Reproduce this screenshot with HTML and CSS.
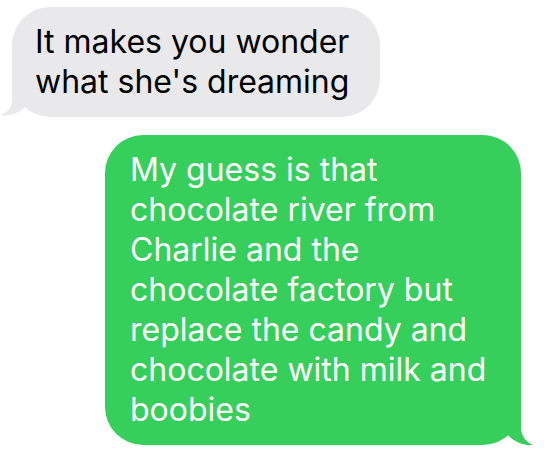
FILE: index.html
```html
<!DOCTYPE html>
<html>
<head>
<meta charset="utf-8">
<link rel="stylesheet" href="styles.css">
</head>
<body>
<div class="thread">
  <div class="bubble received">
    <svg class="tail tail-left" width="40" height="40" viewBox="0 0 40 40"><path d="M12 0 L12 22 C12 31 7 36 0 38 C7 40 18 37 25 30 L25 0 Z" fill="#e9e9eb"/></svg>
    <span class="text">It makes you wonder<br>what she's dreaming</span>
  </div>
  <div class="bubble sent">
    <svg class="tail tail-right" width="40" height="40" viewBox="0 0 40 40"><path d="M28 0 L28 22 C28 31 33 37 40 40 C33 41 22 38 15 30 L15 0 Z" fill="#36cf5b"/></svg>
    <span class="text">My guess is that<br>chocolate river from<br>Charlie and the<br>chocolate factory but<br>replace the candy and<br>chocolate with milk and<br>boobies</span>
  </div>
</div>
</body>
</html>
```
FILE: styles.css
```css
html, body {
  margin: 0;
  padding: 0;
  background: #ffffff;
}
.thread {
  width: 552px;
  height: 461px;
  display: flex;
  flex-direction: column;
  padding-top: 7px;
  box-sizing: border-box;
  font-family: "Inter", "Liberation Sans", sans-serif;
  font-size: 32px;
  line-height: 40px;
}
.bubble {
  position: relative;
  border-radius: 38px;
  box-sizing: border-box;
}
.received {
  align-self: flex-start;
  margin-left: 12px;
  width: 368px;
  height: 110px;
  padding: 15px 0 0 23px;
  background: #e9e9eb;
  color: #000;
}
.sent {
  align-self: flex-start;
  margin-left: 105px;
  margin-top: 18px;
  width: 416px;
  height: 310px;
  padding: 15px 0 0 25px;
  background: #36cf5b;
  color: #fff;
}
.text {
  position: relative;
  display: block;
  white-space: nowrap;
}
.tail {
  position: absolute;
  bottom: 0;
}
.tail-left {
  left: -12px;
}
.tail-right {
  right: -12px;
}
```
